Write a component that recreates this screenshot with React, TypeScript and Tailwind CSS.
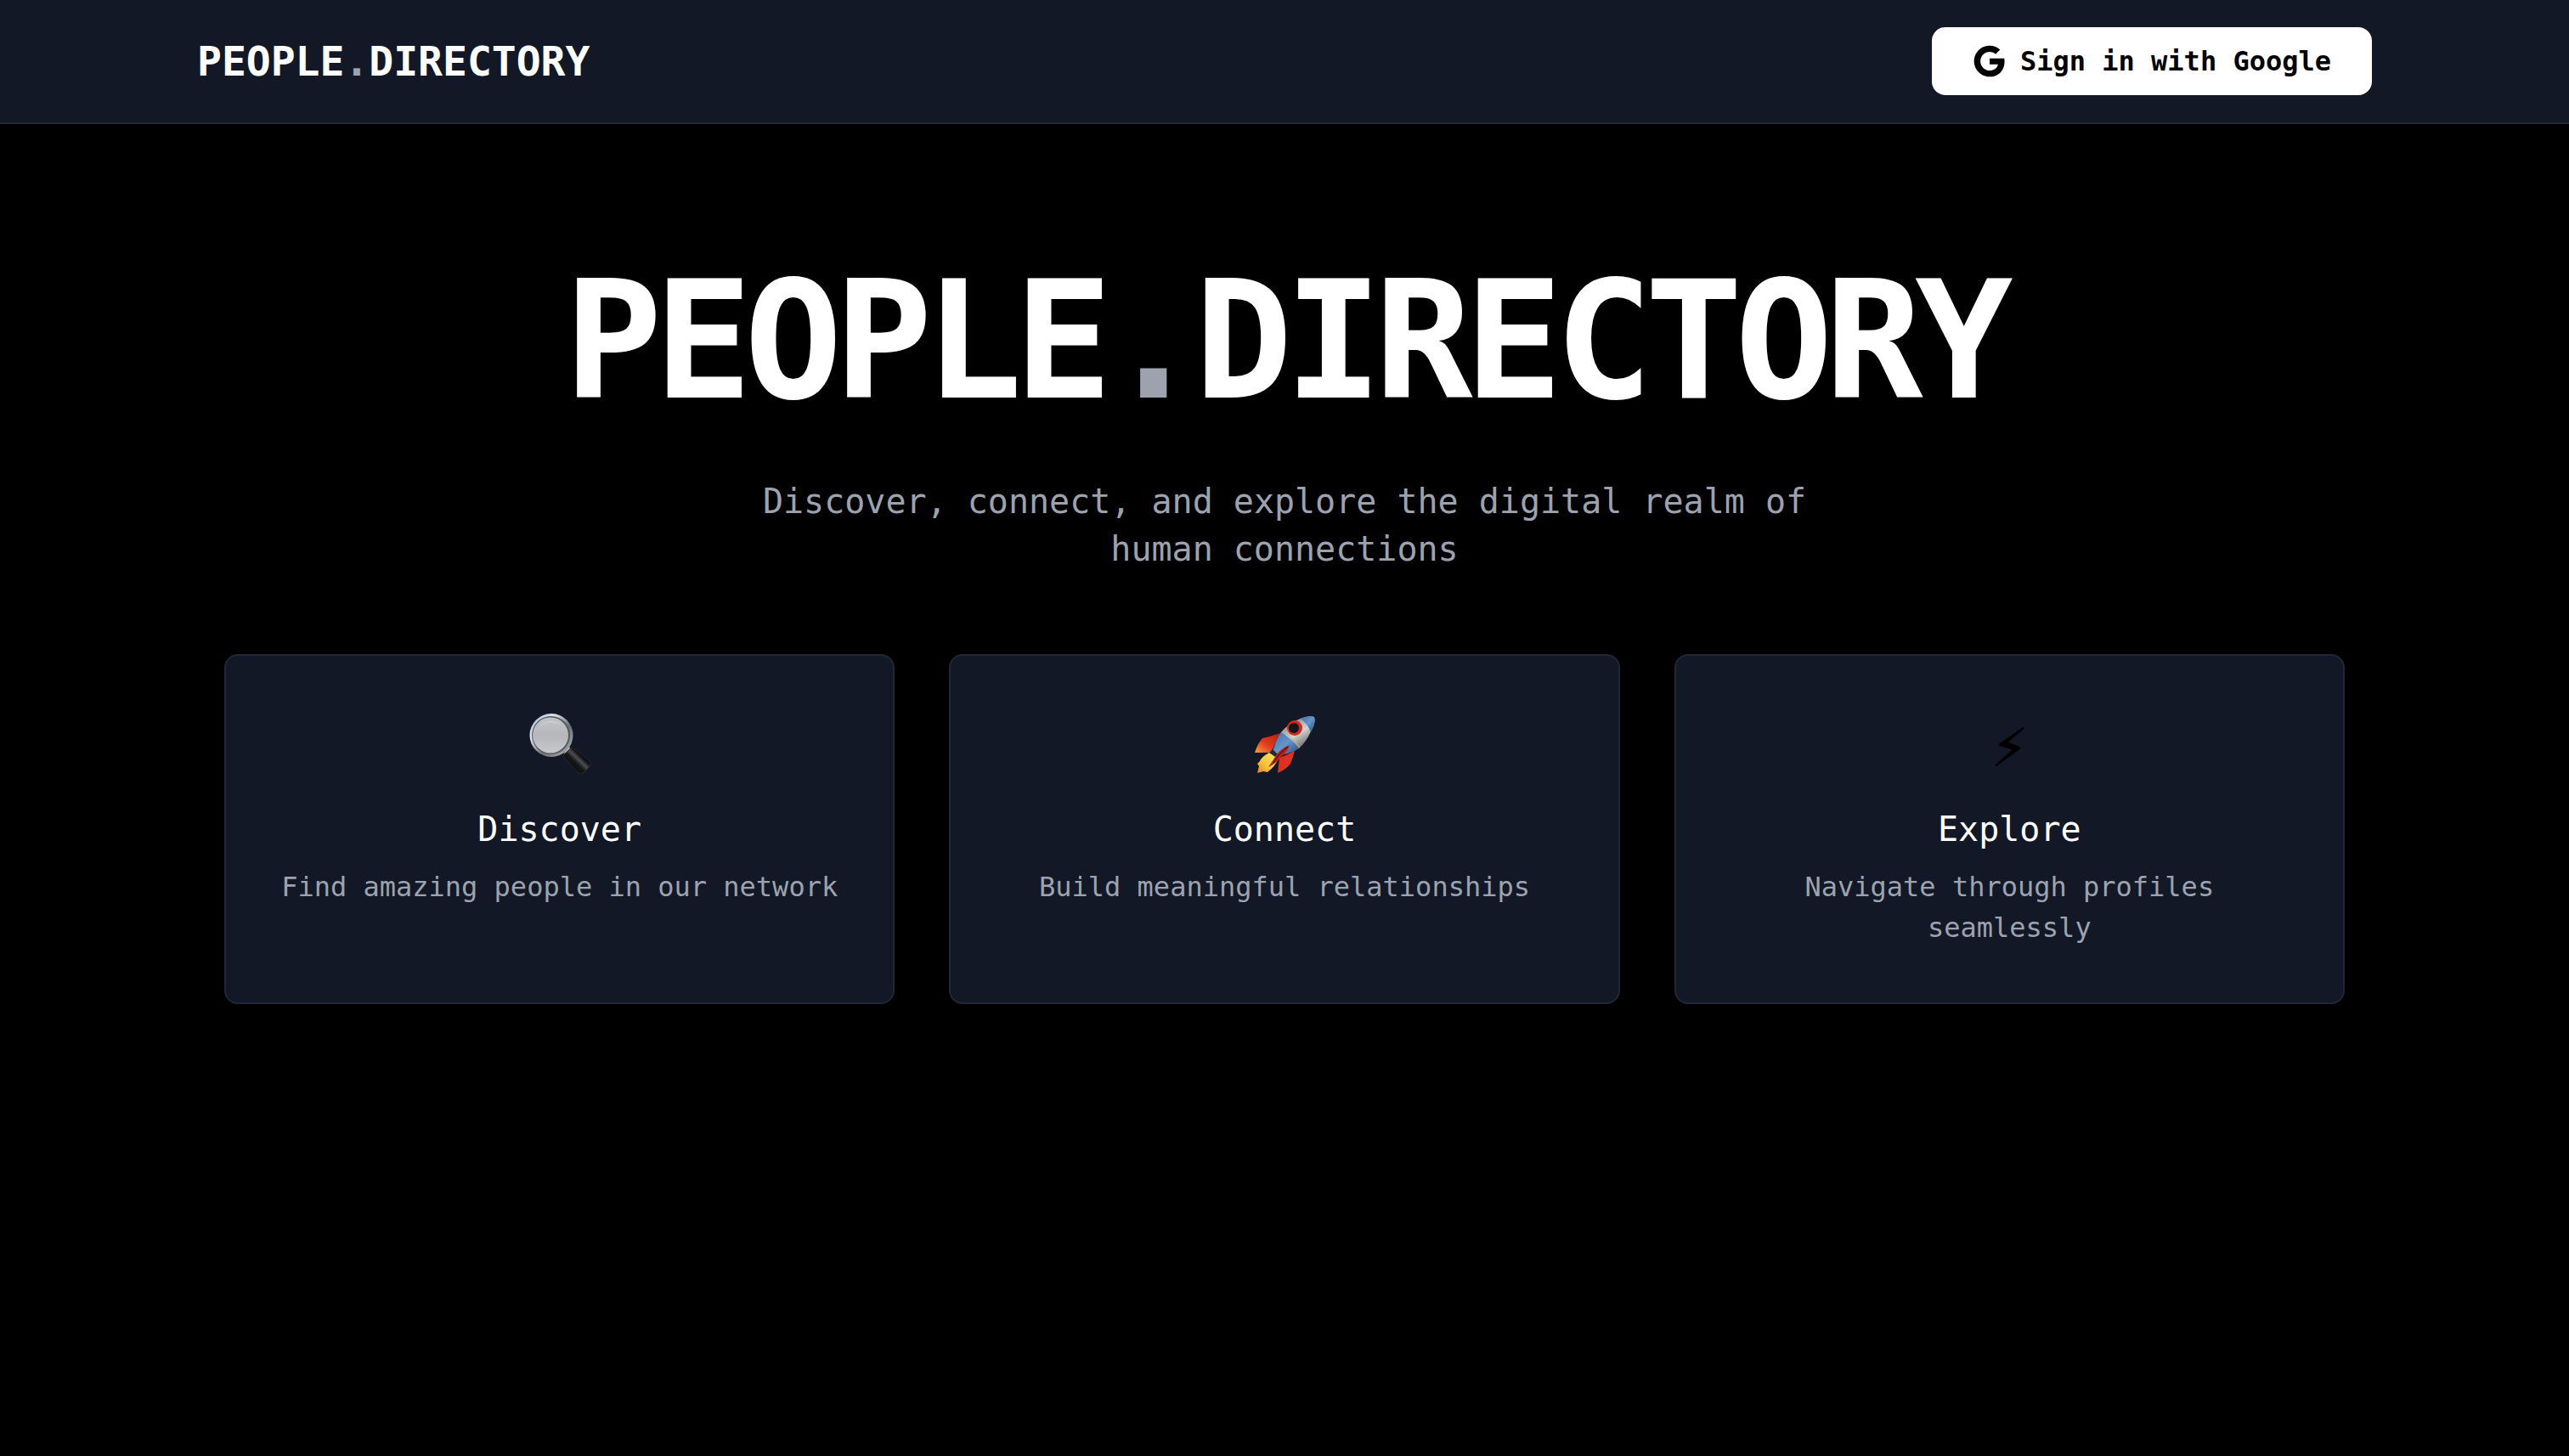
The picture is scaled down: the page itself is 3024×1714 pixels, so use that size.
import type { ReactNode } from "react";

function GoogleIcon() {
  return (
    <svg viewBox="0 0 24 24" className="size-10" fill="currentColor" aria-hidden="true">
      <path d="M22.56 12.25c0-.78-.07-1.53-.2-2.25H12v4.26h5.92c-.26 1.37-1.04 2.53-2.21 3.31v2.77h3.57c2.08-1.92 3.28-4.74 3.28-8.09z" />
      <path d="M12 23c2.97 0 5.46-.98 7.28-2.66l-3.57-2.77c-.98.66-2.23 1.06-3.71 1.06-2.86 0-5.29-1.93-6.16-4.53H2.18v2.84C3.99 20.53 7.7 23 12 23z" />
      <path d="M5.84 14.09c-.22-.66-.35-1.36-.35-2.09s.13-1.43.35-2.09V7.07H2.18C1.43 8.55 1 10.22 1 12s.43 3.45 1.18 4.93l2.85-2.22.81-.62z" />
      <path d="M12 5.38c1.62 0 3.06.56 4.21 1.64l3.15-3.15C17.45 2.09 14.97 1 12 1 7.7 1 3.99 3.47 2.18 7.07l3.66 2.84c.87-2.6 3.3-4.53 6.16-4.53z" />
    </svg>
  );
}

function MagnifierIcon() {
  return (
    <svg viewBox="4 1 110 110" className="size-[110px]" aria-hidden="true">
      <defs>
        <linearGradient id="rim" x1="0" y1="0" x2="1" y2="1">
          <stop offset="0" stopColor="#8fb0dc" />
          <stop offset="0.3" stopColor="#dfe6ee" />
          <stop offset="0.6" stopColor="#6b6e72" />
          <stop offset="1" stopColor="#b9bcc0" />
        </linearGradient>
        <linearGradient id="lens" x1="0" y1="0" x2="0" y2="1">
          <stop offset="0" stopColor="#c3c4c8" />
          <stop offset="0.5" stopColor="#b6b7bb" />
          <stop offset="1" stopColor="#c6c8ca" />
        </linearGradient>
        <linearGradient id="grip" x1="0.2" y1="0.8" x2="0.8" y2="0.2">
          <stop offset="0" stopColor="#08080a" />
          <stop offset="0.4" stopColor="#18181b" />
          <stop offset="0.58" stopColor="#4c4e53" />
          <stop offset="0.75" stopColor="#131316" />
          <stop offset="1" stopColor="#050506" />
        </linearGradient>
      </defs>
      <path d="M64 67L69 59L74 63L67 70Z" fill="#c8cbce" />
      <circle cx="49" cy="45.500" r="25.500" fill="url(#rim)" />
      <circle cx="48.500" cy="45.500" r="22.500" fill="#55595d" />
      <circle cx="48" cy="45.500" r="21" fill="url(#lens)" />
      <path d="M33 37A18 18 0 0 1 62 35A24 24 0 0 0 33 37Z" fill="#cdced1" opacity="0.700" />
      <path
        d="M64 68L71 61Q73 59 76 61L94 76Q96 78 95 81L87 90Q84 92 81 90L65 73Q63 70 64 68Z"
        fill="url(#grip)"
        stroke="#303237"
        strokeWidth="0.700"
      />
    </svg>
  );
}

function RocketIcon() {
  return (
    <svg viewBox="-3 1 110 110" className="size-[110px]" aria-hidden="true">
      <defs>
        <linearGradient id="hull" x1="0.3" y1="0.2" x2="0.7" y2="0.8">
          <stop offset="0" stopColor="#8a8c8c" />
          <stop offset="0.5" stopColor="#d4d5d1" />
          <stop offset="1" stopColor="#6d6e6c" />
        </linearGradient>
        <linearGradient id="nose" x1="0" y1="0" x2="1" y2="1">
          <stop offset="0" stopColor="#3f70a8" />
          <stop offset="0.5" stopColor="#6496cc" />
          <stop offset="1" stopColor="#234a82" />
        </linearGradient>
        <linearGradient id="fin" x1="1" y1="0" x2="0" y2="1">
          <stop offset="0" stopColor="#b32012" />
          <stop offset="0.55" stopColor="#e2391d" />
          <stop offset="1" stopColor="#f7a13a" />
        </linearGradient>
        <linearGradient id="flame" x1="1" y1="0" x2="0" y2="1">
          <stop offset="0" stopColor="#ffe65a" />
          <stop offset="0.6" stopColor="#fbc63c" />
          <stop offset="1" stopColor="#ef7d22" />
        </linearGradient>
      </defs>
      <path d="M47 43Q36 47 26 49Q20 56 17 66L36 66Q41 55 47 43Z" fill="url(#fin)" />
      <path d="M64 64Q54 69 46 72L44 90Q54 86 59 79Q62 72 64 64Z" fill="#dc321f" />
      <path d="M34 66Q25 71 23 76L20 79L22 82L20 90L27 88L32 89Q41 82 45 73Q41 67 34 66Z" fill="url(#flame)" />
      <path d="M48 42Q57 31 73 25Q81 22 87 24Q89 32 83 41Q78 53 69 61Q57 68 43 69L39 64Q42 52 48 42Z" fill="url(#hull)" />
      <path d="M48 42Q60 49 69 61Q57 68 43 69L38 64Q42 52 48 42Z" fill="url(#nose)" />
      <path d="M71 26Q81 22 87 24Q89 32 83 42Q79 32 71 26Z" fill="url(#nose)" />
      <path d="M50 40Q61 49 70 60" fill="none" stroke="#c9b36a" strokeWidth="1" />
      <path d="M38 62L44 68L41 71L34 66Z" fill="#222b38" />
      <circle cx="64" cy="37" r="9" fill="#d5281c" />
      <circle cx="63" cy="37" r="6" fill="#14161b" />
      <path d="M58 57Q45 63 41 71L33 83Q42 79 48 71Q55 66 58 57Z" fill="#b92217" />
      <path d="M56 59Q46 66 39 78" fill="none" stroke="#5f120e" strokeWidth="1.500" />
    </svg>
  );
}

function BoltIcon() {
  return (
    <svg viewBox="0 1 90 90" className="size-[90px]" aria-hidden="true">
      <path
        d="M61.500 26Q63 26.500 62 28L44 43.500L57 49Q59 50.500 57.500 52L30 72Q28 72.500 28.500 70.500L48.500 52.500L34 48Q32 47 33 45.500Z"
        fill="#000"
      />
    </svg>
  );
}

type Feature = { title: string; text: string; icon: ReactNode };

const features: Feature[] = [
  { title: "Discover", text: "Find amazing people in our network", icon: <MagnifierIcon /> },
  { title: "Connect", text: "Build meaningful relationships", icon: <RocketIcon /> },
  { title: "Explore", text: "Navigate through profiles seamlessly", icon: <BoltIcon /> },
];

function FeatureCard({ title, text, icon }: Feature) {
  return (
    <article className="rounded-2xl border-2 border-[#202836] bg-[#121826] p-16 text-center">
      <div className="mb-8 flex h-20 items-center justify-center">{icon}</div>
      <h2 className="mb-4 text-[40px] leading-14 text-white">{title}</h2>
      <p className="text-[32px] leading-12 text-[#9ca3af]">{text}</p>
    </article>
  );
}

export default function App() {
  return (
    <div className="min-h-screen bg-black font-['DejaVu_Sans_Mono',monospace]">
      <header className="border-b-2 border-[#202836] bg-[#121826] py-8">
        <div className="mx-auto flex max-w-[2560px] items-center justify-between">
          <a href="#" className="text-5xl leading-16 font-bold text-white">
            PEOPLE<span className="text-[#9ca3af]">.</span>DIRECTORY
          </a>
          <button
            type="button"
            className="flex items-center gap-4 rounded-2xl bg-white px-12 py-4 text-[32px] leading-12 font-bold text-black"
          >
            <GoogleIcon />
            Sign in with Google
          </button>
        </div>
      </header>
      <main className="mx-auto max-w-[2560px] px-8 py-40">
        <h1 className="mb-16 text-center text-[192px] leading-none font-bold tracking-tighter text-white">
          PEOPLE<span className="text-[#9ca3af]">.</span>DIRECTORY
        </h1>
        <p className="mx-auto mb-24 max-w-[1344px] text-center text-[40px] leading-14 text-[#9ca3af]">
          Discover, connect, and explore the digital realm of human connections
        </p>
        <section className="grid grid-cols-3 gap-16">
          {features.map((feature) => (
            <FeatureCard key={feature.title} {...feature} />
          ))}
        </section>
      </main>
    </div>
  );
}
